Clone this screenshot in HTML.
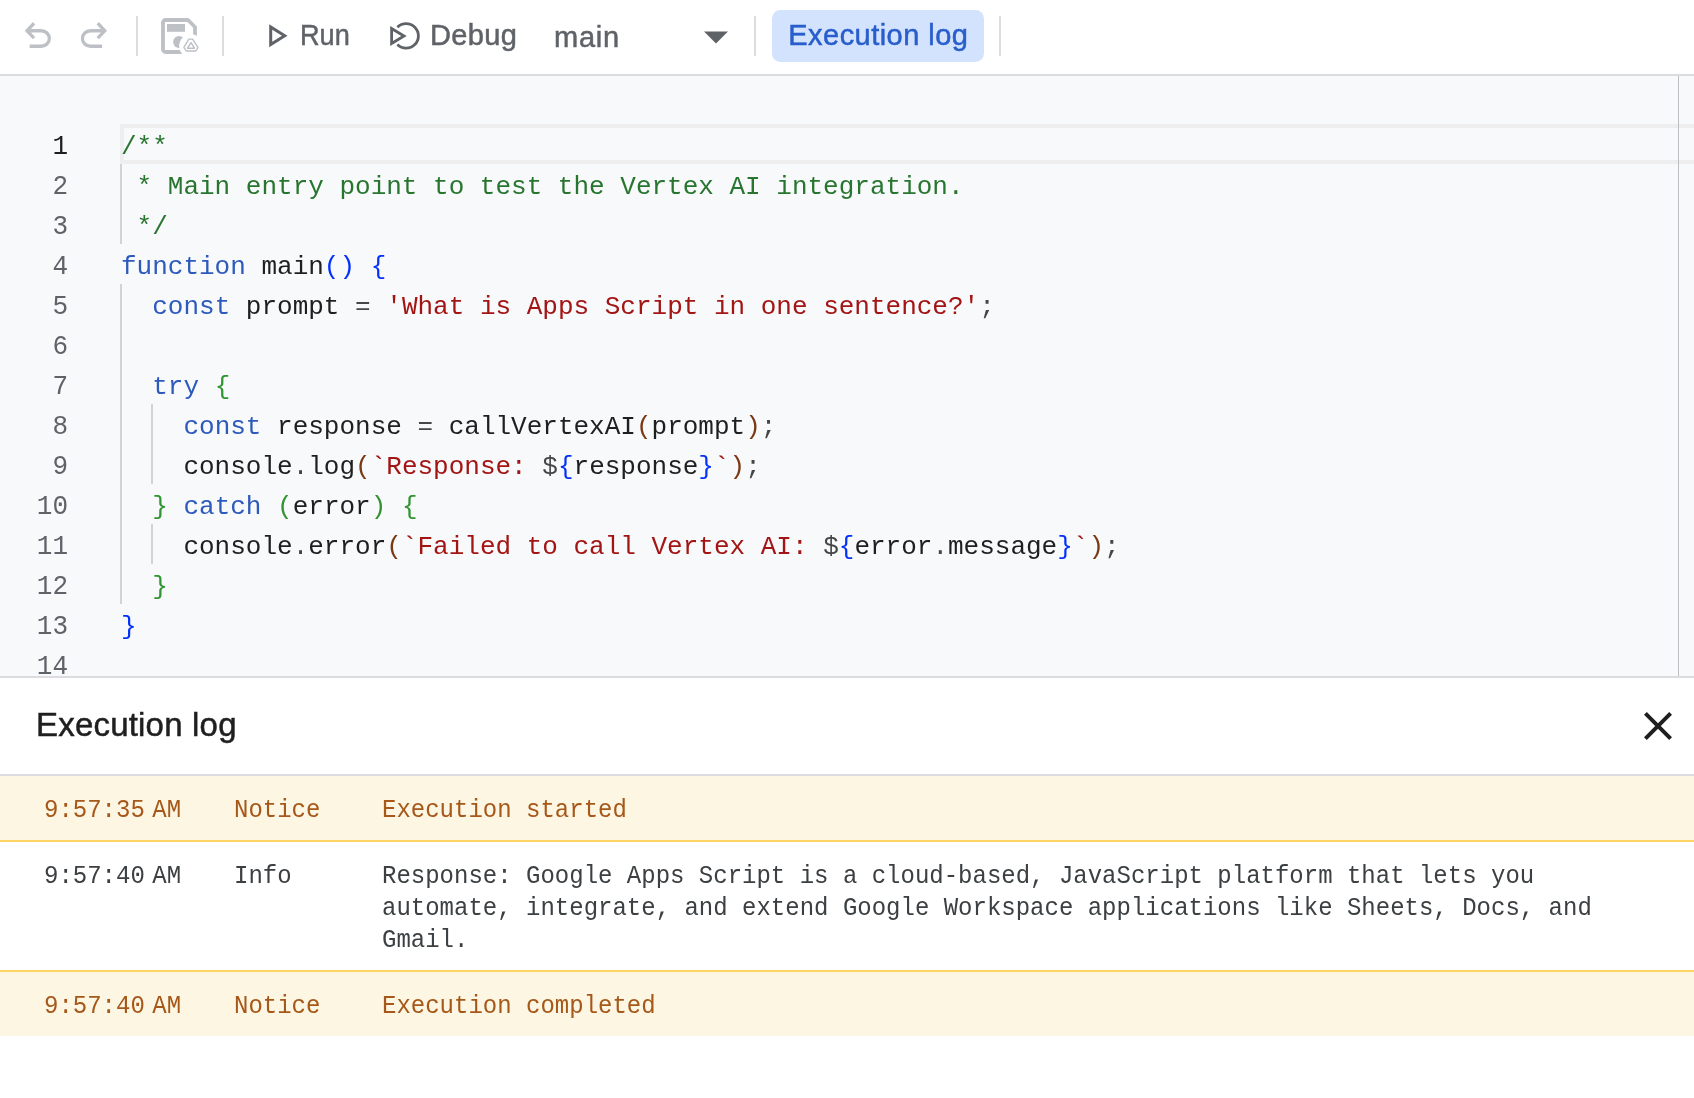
<!DOCTYPE html>
<html><head><meta charset="utf-8">
<style>
*{margin:0;padding:0;box-sizing:border-box}
html,body{width:1694px;height:1098px;overflow:hidden;background:#fff}
#wrap{will-change:transform}
body{position:relative;font-family:"Liberation Sans",sans-serif}
.abs{position:absolute}
#toolbar{position:absolute;left:0;top:0;width:1694px;height:74px;background:#fff}
#tbborder{position:absolute;left:0;top:74px;width:1694px;height:2px;background:#dadce0}
.sep{position:absolute;top:16px;width:2px;height:40px;background:#dadce0}
.tbtext{position:absolute;font-size:29px;color:#5f6368;-webkit-text-stroke:0.5px currentColor;white-space:nowrap;line-height:1}
#btn{position:absolute;left:772px;top:10px;width:212px;height:52px;border-radius:8px;background:#d3e3fd}
#editor{position:absolute;left:0;top:76px;width:1694px;height:600px;background:#f8f9fa;overflow:hidden}
#edborder{position:absolute;left:0;top:676px;width:1694px;height:2px;background:#dadce0}
.ln{position:absolute;left:0;width:68px;text-align:right;font-family:"Liberation Mono",monospace;font-size:26px;line-height:40px;height:40px;color:#5f6368;transform:translateY(3.2px) scaleY(1.086);transform-origin:50% 27px}
.code{position:absolute;left:121px;font-family:"Liberation Mono",monospace;font-size:26px;line-height:40px;height:40px;white-space:pre;color:#1f1f1f;transform:translateY(2.5px)}
.guide{position:absolute;width:2px;background:#d3d3d3}
.c{color:#287530}.k{color:#2d5abb}.s{color:#a31515}.p{color:#444746}
.b1{color:#0431fa}.b2{color:#319331}.b3{color:#7b3814}
#log{position:absolute;left:0;top:678px;width:1694px;height:420px;background:#fff}
.row{position:absolute;left:0;width:1694px}
.mono{font-family:"Liberation Mono",monospace;font-size:24px;line-height:32px;white-space:pre;position:absolute;transform:translateY(2.4px) scaleY(1.04);transform-origin:50% 16px}
.notice{color:#a5581a}
.info{color:#3c4043}
</style></head><body><div id="wrap" style="position:absolute;left:0;top:0;width:1694px;height:1098px">
<div id="toolbar">
  <svg class="abs" style="left:0;top:0" width="1694" height="74" viewBox="0 0 1694 74">
    <defs>
      <mask id="savemask"><rect x="150" y="0" width="60" height="74" fill="#fff"/><circle cx="191" cy="46" r="11.8" fill="#000"/></mask>
    </defs>
    <svg x="18.12" y="15.14" width="39.45" height="41.5" viewBox="0 -960 960 960" preserveAspectRatio="none"><path fill="#bdc1c6" d="M280-200v-80h284q63 0 109.5-40T720-420q0-60-46.5-100T564-560H312l104 104-56 56-200-200 200-200 56 56-104 104h252q97 0 166.5 63T800-420q0 94-69.5 157T564-200H280Z"/></svg>
    <svg x="74.2" y="15.14" width="39.45" height="41.5" viewBox="0 -960 960 960" preserveAspectRatio="none"><path fill="#bdc1c6" d="M396-200q-97 0-166.5-63T160-420q0-94 69.5-157T396-640h252L544-744l56-56 200 200-200 200-56-56 104-104H396q-63 0-109.5 40T240-420q0 60 46.5 100T396-280h284v80H396Z"/></svg>
    <g mask="url(#savemask)" fill="#bdc1c6">
      <path fill="none" stroke="#bdc1c6" stroke-width="3.8" stroke-linejoin="round" d="M185 52H165.5a2.5 2.5 0 0 1-2.5-2.5V22.5a2.5 2.5 0 0 1 2.5-2.5H188L195 27V40"/>
      <rect x="167" y="24" width="18" height="7.8"/>
      <circle cx="179" cy="42" r="5.9"/>
    </g>
    <path fill="none" stroke="#bdc1c6" stroke-width="1.4" stroke-linejoin="round" d="M188.8 39.1H192.6L198 47.3L195.9 51H186.2L183.9 47.3Z"/>
    <path fill="none" stroke="#bdc1c6" stroke-width="1.5" stroke-linejoin="round" d="M191 42.6L194.5 48.2H187.5Z"/>
    <rect x="136" y="16" width="2" height="40" fill="#dadce0"/>
    <rect x="222" y="16" width="2" height="40" fill="#dadce0"/>
    <rect x="754" y="16" width="2" height="40" fill="#dadce0"/>
    <rect x="999" y="16" width="2" height="40" fill="#dadce0"/>
    <path fill="none" stroke="#5f6368" stroke-width="3" d="M270.7 27v17.6l14-8.8z"/>
    <path fill="none" stroke="#5f6368" stroke-width="2.8" d="M397.4 27.2A12.3 12.3 0 1 1 397.4 44.6"/>
    <path fill="none" stroke="#5f6368" stroke-width="2.8" d="M391.6 28.5v15l12.4-7.5z"/>
    <path fill="#5f6368" d="M704 31.5h24L716 43.5z"/>
    <rect x="772" y="10" width="212" height="52" rx="8.5" fill="#d3e3fd"/>
  </svg>
  <div class="tbtext" style="left:300px;top:21.25px;transform:scaleX(0.935);transform-origin:0 0">Run</div>
  <div class="tbtext" style="left:430px;top:21.4px;letter-spacing:0.35px">Debug</div>
  <div class="tbtext" style="left:554px;top:23.3px;letter-spacing:0.77px">main</div>
  <div class="tbtext" style="left:788.3px;top:20.9px;color:#285ecc;letter-spacing:0.46px">Execution log</div>
</div>
<div id="tbborder"></div>

<div id="editor">
  <!-- current line box (line 1) -->
  <div class="abs" style="left:120px;top:48px;width:1600px;height:40px;border:4px solid #eeeeee;border-right:none"></div>
  <div class="abs" style="left:1678px;top:0;width:1px;height:600px;background:#bdbec1"></div>
  <div class="guide" style="left:120px;top:88px;height:80px"></div>
  <div class="guide" style="left:120px;top:208px;height:320px"></div>
  <div class="guide" style="left:151px;top:328px;height:80px"></div>
  <div class="guide" style="left:151px;top:448px;height:40px"></div>

  <div class="ln" style="top:48px;color:#1f1f1f">1</div>
  <div class="ln" style="top:88px">2</div>
  <div class="ln" style="top:128px">3</div>
  <div class="ln" style="top:168px">4</div>
  <div class="ln" style="top:208px">5</div>
  <div class="ln" style="top:248px">6</div>
  <div class="ln" style="top:288px">7</div>
  <div class="ln" style="top:328px">8</div>
  <div class="ln" style="top:368px">9</div>
  <div class="ln" style="top:408px">10</div>
  <div class="ln" style="top:448px">11</div>
  <div class="ln" style="top:488px">12</div>
  <div class="ln" style="top:528px">13</div>
  <div class="ln" style="top:568px">14</div>

  <div class="code" style="top:48px"><span class="c">/**</span></div>
  <div class="code" style="top:88px"><span class="c"> * Main entry point to test the Vertex AI integration.</span></div>
  <div class="code" style="top:128px"><span class="c"> */</span></div>
  <div class="code" style="top:168px"><span class="k">function</span> main<span class="b1">()</span> <span class="b1">{</span></div>
  <div class="code" style="top:208px">  <span class="k">const</span> prompt <span class="p">=</span> <span class="s">'What is Apps Script in one sentence?'</span><span class="p">;</span></div>
  <div class="code" style="top:288px">  <span class="k">try</span> <span class="b2">{</span></div>
  <div class="code" style="top:328px">    <span class="k">const</span> response <span class="p">=</span> callVertexAI<span class="b3">(</span>prompt<span class="b3">)</span><span class="p">;</span></div>
  <div class="code" style="top:368px">    console<span class="p">.</span>log<span class="b3">(</span><span class="s">`Response: </span><span class="p">$</span><span class="b1">{</span>response<span class="b1">}</span><span class="s">`</span><span class="b3">)</span><span class="p">;</span></div>
  <div class="code" style="top:408px">  <span class="b2">}</span> <span class="k">catch</span> <span class="b2">(</span>error<span class="b2">)</span> <span class="b2">{</span></div>
  <div class="code" style="top:448px">    console<span class="p">.</span>error<span class="b3">(</span><span class="s">`Failed to call Vertex AI: </span><span class="p">$</span><span class="b1">{</span>error<span class="p">.</span>message<span class="b1">}</span><span class="s">`</span><span class="b3">)</span><span class="p">;</span></div>
  <div class="code" style="top:488px">  <span class="b2">}</span></div>
  <div class="code" style="top:528px"><span class="b1">}</span></div>
</div>
<div id="edborder"></div>

<div id="log">
  <div class="abs" style="left:36px;top:30.4px;font-size:33px;line-height:1;color:#1f1f1f;white-space:nowrap;letter-spacing:0.2px;-webkit-text-stroke:0.5px #1f1f1f">Execution log</div>
  <svg class="abs" style="left:1634px;top:24px" width="48" height="48" viewBox="0 0 24 24"><path fill="#1f1f1f" d="M6.4 19L5 17.6 10.6 12 5 6.4 6.4 5 12 10.6 17.6 5 19 6.4 13.4 12 19 17.6 17.6 19 12 13.4 6.4 19z"/></svg>
  <div class="abs" style="left:0;top:96px;width:1694px;height:2px;background:#dadce0"></div>
  <!-- row1 -->
  <div class="row" style="top:98px;height:64px;background:#fdf6e3"></div>
  <div class="row" style="top:162px;height:2px;background:#fdd663"></div>
  <div class="mono notice" style="left:44px;top:114px">9:57:35<span style="display:inline-block;width:7.5px"></span>AM</div>
  <div class="mono notice" style="left:234px;top:114px">Notice</div>
  <div class="mono notice" style="left:382px;top:114px">Execution started</div>
  <!-- row2 -->
  <div class="mono info" style="left:44px;top:180px">9:57:40<span style="display:inline-block;width:7.5px"></span>AM</div>
  <div class="mono info" style="left:234px;top:180px">Info</div>
  <div class="mono info" style="left:382px;top:180px">Response: Google Apps Script is a cloud-based, JavaScript platform that lets you</div>
  <div class="mono info" style="left:382px;top:212px">automate, integrate, and extend Google Workspace applications like Sheets, Docs, and</div>
  <div class="mono info" style="left:382px;top:244px">Gmail.</div>
  <div class="row" style="top:292px;height:2px;background:#fdd663"></div>
  <!-- row3 -->
  <div class="row" style="top:294px;height:64px;background:#fdf6e3"></div>
  <div class="mono notice" style="left:44px;top:310px">9:57:40<span style="display:inline-block;width:7.5px"></span>AM</div>
  <div class="mono notice" style="left:234px;top:310px">Notice</div>
  <div class="mono notice" style="left:382px;top:310px">Execution completed</div>
</div>
</div></body></html>
